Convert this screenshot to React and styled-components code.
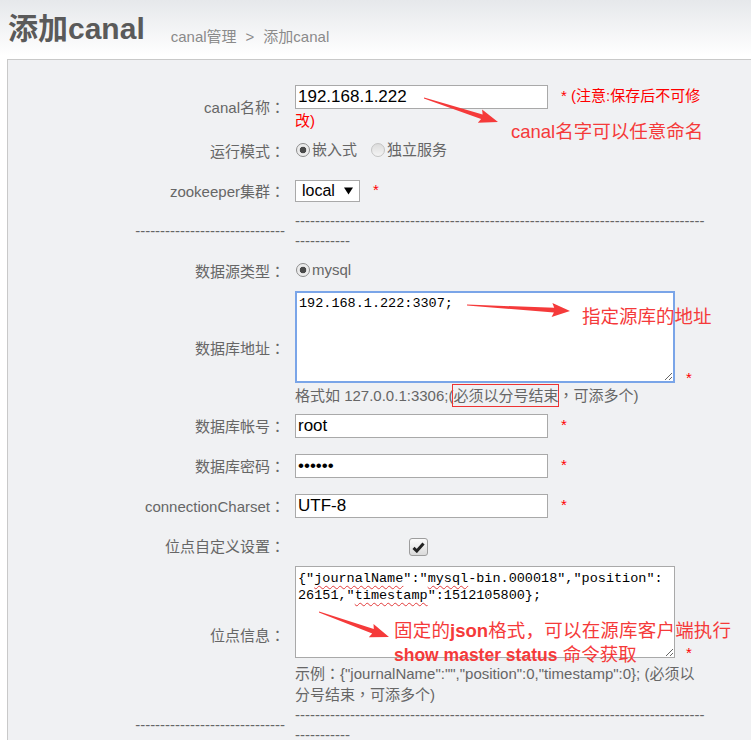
import React from 'react';
import styled, { createGlobalStyle } from 'styled-components';

const GlobalStyle = createGlobalStyle`
  html, body {
    margin: 0;
    padding: 0;
    background: #fff;
  }
  body {
    font-family: "Liberation Sans", Arial, "Noto Sans CJK SC", sans-serif;
    overflow: hidden;
  }
`;

const SANS = `"Liberation Sans", Arial, "Noto Sans CJK SC", sans-serif`;
const MONO = `"Liberation Mono", "Courier New", "Noto Sans CJK SC", monospace`;

const Page = styled.div`
  position: relative;
  width: 751px;
  height: 740px;
  overflow: hidden;
  background: linear-gradient(180deg, #e6e8eb 0px, #ffffff 56px);
`;

const Header = styled.div`
  display: flex;
  align-items: flex-start;
  height: 59px;
  box-sizing: border-box;
  padding: 11px 0 0 8px;
`;

const Title = styled.h1`
  margin: 0;
  font-family: ${SANS};
  font-size: 30px;
  line-height: 36px;
  font-weight: bold;
  color: #5a5a5a;
`;

const Crumbs = styled.div`
  margin: 16px 0 0 26px;
  font-size: 15px;
  line-height: 20px;
  color: #8a8a8a;
`;

const CrumbSep = styled.span`
  margin: 0 9px;
`;

const Panel = styled.div`
  margin-left: 7px;
  width: 780px;
  min-height: 700px;
  box-sizing: border-box;
  padding-top: 23px;
  border: 1px solid #c9c9c9;
  background: #f0f1f3;
`;

const Row = styled.div`
  display: grid;
  grid-template-columns: 277px 413px;
  column-gap: 10px;
  align-items: center;
  min-height: 40px;
`;

const Label = styled.div`
  text-align: right;
  font-size: 15px;
  line-height: 20px;
  color: #666;
`;

/* full-width punctuation drawn centred in its em box, as in the original page */
const Punct = styled.span`
  font-family: "Noto Sans CJK TC", "Noto Sans CJK SC", sans-serif;
`;

const Value = styled.div`
  font-size: 15px;
  line-height: 20px;
  color: #666;
`;

const Dashes = styled.div`
  font-size: 15px;
  line-height: 20px;
  color: #666;
  word-break: break-all;
  text-align: ${(p) => (p.$right ? 'right' : 'left')};
`;

const Input = styled.input`
  box-sizing: border-box;
  width: 253px;
  height: 24px;
  margin: 2px 0;
  padding: 0 2px;
  border: 1px solid #a9a9a9;
  background: #fff;
  font-family: ${SANS};
  font-size: 17px;
  color: #000;
  vertical-align: middle;
  outline: none;
`;

const Star = styled.span`
  margin-left: ${(p) => p.$gap || 13}px;
  color: #f00;
`;

const Warn = styled.span`
  margin-left: 13px;
  color: #f00;
`;

const Choice = styled.label`
  display: inline-flex;
  align-items: center;
  margin-right: 13px;
  color: #666;
`;

const RadioDot = styled.span`
  box-sizing: border-box;
  width: 14px;
  height: 14px;
  margin: 0 2px 0 1px;
  border-radius: 50%;
  border: 1px solid ${(p) => (p.$on ? '#8c8c8c' : '#c4c4c4')};
  background: ${(p) =>
    p.$on
      ? 'radial-gradient(circle, #4a4a4a 0 3px, #e8e8e8 3.6px, #f6f6f6 100%)'
      : 'linear-gradient(180deg, #dcdcdc, #f4f4f4)'};
`;

const Select = styled.span`
  display: inline-flex;
  align-items: center;
  box-sizing: border-box;
  width: 65px;
  height: 22px;
  padding-left: 6px;
  border: 1px solid #a9a9a9;
  background: #fff;
  font-size: 16px;
  color: #000;
  vertical-align: middle;
`;

const Caret = styled.svg`
  margin-left: 9px;
`;

const Area = styled.textarea`
  box-sizing: border-box;
  width: 380px;
  height: 92px;
  margin: 0;
  padding: 2px 2px;
  border: 2px solid #7aa5e8;
  background: #fff;
  font-family: ${MONO};
  font-size: 13.5px;
  line-height: 17px;
  color: #000;
  resize: both;
  outline: none;
`;

const FakeArea = styled.div`
  display: inline-block;
  box-sizing: border-box;
  width: 380px;
  height: 92px;
  padding: 3px 2px;
  border: 1px solid #a9a9a9;
  background: #fff;
  font-family: ${MONO};
  font-size: 13.5px;
  line-height: 17px;
  color: #000;
  white-space: nowrap;
  overflow: hidden;
  resize: both;
`;

const Misspelt = styled.span`
  text-decoration: underline wavy #e23b3b;
  text-decoration-thickness: 1px;
  text-underline-offset: 3px;
`;

const Hint = styled.div`
  margin-top: ${(p) => p.$lift || 0}px;
  font-size: 15px;
  line-height: 20px;
  color: #666;
`;

const Boxed = styled.span`
  padding: 2px 0;
  box-shadow: 0 0 0 1px #ee3333;
`;

const Check = styled.span`
  display: inline-flex;
  align-items: center;
  justify-content: center;
  box-sizing: border-box;
  width: 19px;
  height: 18px;
  margin-left: 114px;
  border: 1px solid #9d9d9d;
  border-radius: 3px;
  background: linear-gradient(180deg, #fbfbfb, #dadada);
  vertical-align: middle;
`;

const Callout = styled.div`
  position: absolute;
  left: ${(p) => p.$x}px;
  top: ${(p) => p.$y}px;
  font-family: ${SANS};
  font-size: ${(p) => p.$size || 18.5}px;
  line-height: ${(p) => p.$lh || 22}px;
  letter-spacing: ${(p) => p.$ls || 0}px;
  color: #f53a3a;
  white-space: nowrap;
  pointer-events: none;
`;

const Strong = styled.b`
  font-size: ${(p) => p.$size || 'inherit'};
  letter-spacing: 0;
`;

const Plain = styled.span`
  font-size: 18.5px;
  letter-spacing: 0;
`;

const Overlay = styled.svg`
  position: absolute;
  left: 0;
  top: 0;
  pointer-events: none;
`;

function arrowPoints(x1, y1, x2, y2, head = 17, wing = 7, shaft = 2.4) {
  const dx = x2 - x1;
  const dy = y2 - y1;
  const len = Math.hypot(dx, dy);
  const ux = dx / len;
  const uy = dy / len;
  const nx = -uy;
  const ny = ux;
  const at = (along, side) => [x1 + ux * along + nx * side, y1 + uy * along + ny * side];
  const base = len - head;
  const pts = [
    at(0, -0.4),
    at(base, -shaft),
    at(base - 2, -wing),
    at(len, 0),
    at(base - 2, wing),
    at(base, shaft),
    at(0, 0.4),
  ];
  return pts.map((p) => p.map((v) => v.toFixed(1)).join(',')).join(' ');
}

const Radio = ({ on, children }) => (
  <Choice>
    <RadioDot $on={on} />
    {children}
  </Choice>
);

const Field = ({ label, children }) => (
  <Row>
    <Label>
      {label}
      <Punct>：</Punct>
    </Label>
    <Value>{children}</Value>
  </Row>
);

const Divider = () => (
  <Row>
    <Dashes $right>{'-'.repeat(30)}</Dashes>
    <Dashes>{'-'.repeat(93)}</Dashes>
  </Row>
);

export default function App() {
  return (
    <Page>
      <GlobalStyle />
      <Header>
        <Title>添加canal</Title>
        <Crumbs>
          canal管理<CrumbSep>&gt;</CrumbSep>添加canal
        </Crumbs>
      </Header>

      <Panel>
        <Field label="canal名称">
          <Input defaultValue="192.168.1.222" />
          <Warn>* (注意:保存后不可修改)</Warn>
        </Field>
        <Field label="运行模式">
          <Radio on>嵌入式</Radio>
          <Radio>独立服务</Radio>
        </Field>
        <Field label="zookeeper集群">
          <Select>
            local
            <Caret width="9" height="8" viewBox="0 0 9 8">
              <path d="M0 0.5 H9 L4.5 7.5 Z" fill="#000" />
            </Caret>
          </Select>
          <Star>*</Star>
        </Field>
        <Divider />
        <Field label="数据源类型">
          <Radio on>mysql</Radio>
        </Field>
        <Field label="数据库地址">
          <Area defaultValue="192.168.1.222:3307;" spellCheck={false} />
          <Star $gap={11}>*</Star>
          <Hint $lift={-3}>
            格式如 127.0.0.1:3306;(<Boxed>必须以分号结束</Boxed>
            <Punct>，</Punct>可添多个)
          </Hint>
        </Field>
        <Field label="数据库帐号">
          <Input defaultValue="root" />
          <Star>*</Star>
        </Field>
        <Field label="数据库密码">
          <Input type="password" defaultValue="123456" />
          <Star>*</Star>
        </Field>
        <Field label="connectionCharset">
          <Input defaultValue="UTF-8" />
          <Star>*</Star>
        </Field>
        <Field label="位点自定义设置">
          <Check>
            <svg width="13" height="11" viewBox="0 0 13 11">
              <path d="M1.5 5.8 L4.8 9 L11.5 1.5" fill="none" stroke="#222" strokeWidth="3" />
            </svg>
          </Check>
        </Field>
        <Field label="位点信息">
          <FakeArea>
            {'{"'}
            <Misspelt>journalName</Misspelt>
            {'":"'}
            <Misspelt>mysql</Misspelt>
            {'-bin.000018","position":'}
            <br />
            {'26151,"'}
            <Misspelt>timestamp</Misspelt>
            {'":1512105800};'}
          </FakeArea>
          <Star $gap={11}>*</Star>
          <Hint>
            示例<Punct>：</Punct>
            {'{"journalName":"","position":0,"timestamp":0}'}; (必须以分号结束<Punct>，</Punct>可添多个)
          </Hint>
        </Field>
        <Divider />
      </Panel>

      <Overlay width="751" height="740" viewBox="0 0 751 740">
        <polygon points={arrowPoints(424, 98, 498, 122)} fill="#f53a3a" />
        <polygon points={arrowPoints(467, 305, 570, 311, 16, 7)} fill="#f53a3a" />
        <polygon points={arrowPoints(319, 612, 389, 637)} fill="#f53a3a" />
      </Overlay>

      <Callout $x={511} $y={121}>canal名字可以任意命名</Callout>
      <Callout $x={582} $y={306}>指定源库的地址</Callout>
      <Callout $x={394} $y={619} $lh={24} $ls={0.2}>
        固定的<Strong>json</Strong>格式，可以在源库客户端执行
        <br />
        <Strong $size="17.5px">show master status</Strong> <Plain>命令获取</Plain>
      </Callout>
    </Page>
  );
}
